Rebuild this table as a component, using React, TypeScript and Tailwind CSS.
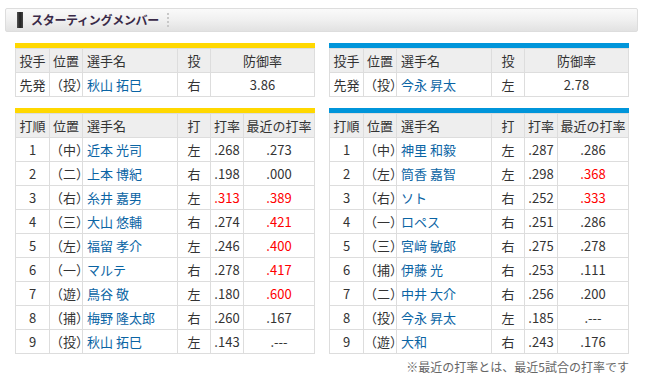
import type { ReactNode } from 'react';

type Batter = { order: number; pos: string; name: string; hand: string; avg: string; recent: string; avgHot?: boolean; recentHot?: boolean };

const tigers: Batter[] = [
  { order: 1, pos: '（中）', name: '近本 光司', hand: '左', avg: '.268', recent: '.273' },
  { order: 2, pos: '（二）', name: '上本 博紀', hand: '右', avg: '.198', recent: '.000' },
  { order: 3, pos: '（右）', name: '糸井 嘉男', hand: '左', avg: '.313', recent: '.389', avgHot: true, recentHot: true },
  { order: 4, pos: '（三）', name: '大山 悠輔', hand: '右', avg: '.274', recent: '.421', recentHot: true },
  { order: 5, pos: '（左）', name: '福留 孝介', hand: '左', avg: '.246', recent: '.400', recentHot: true },
  { order: 6, pos: '（一）', name: 'マルテ', hand: '右', avg: '.278', recent: '.417', recentHot: true },
  { order: 7, pos: '（遊）', name: '鳥谷 敬', hand: '左', avg: '.180', recent: '.600', recentHot: true },
  { order: 8, pos: '（捕）', name: '梅野 隆太郎', hand: '右', avg: '.260', recent: '.167' },
  { order: 9, pos: '（投）', name: '秋山 拓巳', hand: '左', avg: '.143', recent: '.---' },
];

const baystars: Batter[] = [
  { order: 1, pos: '（中）', name: '神里 和毅', hand: '左', avg: '.287', recent: '.286' },
  { order: 2, pos: '（左）', name: '筒香 嘉智', hand: '左', avg: '.298', recent: '.368', recentHot: true },
  { order: 3, pos: '（右）', name: 'ソト', hand: '右', avg: '.252', recent: '.333', recentHot: true },
  { order: 4, pos: '（一）', name: 'ロペス', hand: '右', avg: '.251', recent: '.286' },
  { order: 5, pos: '（三）', name: '宮﨑 敏郎', hand: '右', avg: '.275', recent: '.278' },
  { order: 6, pos: '（捕）', name: '伊藤 光', hand: '右', avg: '.253', recent: '.111' },
  { order: 7, pos: '（二）', name: '中井 大介', hand: '右', avg: '.256', recent: '.200' },
  { order: 8, pos: '（投）', name: '今永 昇太', hand: '左', avg: '.185', recent: '.---' },
  { order: 9, pos: '（遊）', name: '大和', hand: '右', avg: '.243', recent: '.176' },
];

function Th({ children, left }: { children: ReactNode; left?: boolean }) {
  return (
    <th className={`h-[24px] whitespace-nowrap border border-[#dddddd] bg-[#eeeeee] p-0 font-normal ${left ? 'pl-[4px] text-left' : 'text-center'}`}>{children}</th>
  );
}

function Td({ children, left, className = '' }: { children: ReactNode; left?: boolean; className?: string }) {
  return (
    <td className={`h-[24px] whitespace-nowrap border border-[#dddddd] bg-white p-0 ${left ? 'pl-[4px] text-left' : 'text-center'} ${className}`}>{children}</td>
  );
}

function PitcherTable({ bar, name, hand, era }: { bar: string; name: string; hand: string; era: string }) {
  return (
    <div className={`w-[300px] border-t-[5px] ${bar}`}>
      <table className="w-full table-fixed border-collapse">
        <colgroup>
          <col className="w-[34px]" />
          <col className="w-[33px]" />
          <col className="w-[95px]" />
          <col className="w-[33px]" />
          <col />
        </colgroup>
        <thead>
          <tr>
            <Th>投手</Th>
            <Th>位置</Th>
            <Th left>選手名</Th>
            <Th>投</Th>
            <Th>防御率</Th>
          </tr>
        </thead>
        <tbody>
          <tr>
            <Td>先発</Td>
            <Td>（投）</Td>
            <Td left className="text-[#0a64a4]">{name}</Td>
            <Td>{hand}</Td>
            <Td>{era}</Td>
          </tr>
        </tbody>
      </table>
    </div>
  );
}

function BattingTable({ bar, rows }: { bar: string; rows: Batter[] }) {
  return (
    <div className={`w-[300px] border-t-[5px] ${bar}`}>
      <table className="w-full table-fixed border-collapse">
        <colgroup>
          <col className="w-[34px]" />
          <col className="w-[33px]" />
          <col className="w-[95px]" />
          <col className="w-[33px]" />
          <col className="w-[33px]" />
          <col />
        </colgroup>
        <thead>
          <tr>
            <Th>打順</Th>
            <Th>位置</Th>
            <Th left>選手名</Th>
            <Th>打</Th>
            <Th>打率</Th>
            <Th>最近の打率</Th>
          </tr>
        </thead>
        <tbody>
          {rows.map((r) => (
            <tr key={r.order}>
              <Td>{r.order}</Td>
              <Td>{r.pos}</Td>
              <Td left className="text-[#0a64a4]">{r.name}</Td>
              <Td>{r.hand}</Td>
              <Td className={r.avgHot ? 'text-[#ff0000]' : ''}>{r.avg}</Td>
              <Td className={r.recentHot ? 'text-[#ff0000]' : ''}>{r.recent}</Td>
            </tr>
          ))}
        </tbody>
      </table>
    </div>
  );
}

export default function App() {
  return (
    <div className="h-[391px] w-[646px] bg-white pt-[8px] font-['Noto_Sans_CJK_JP',sans-serif] text-[13px] leading-none text-[#333333]">
      <div className="mx-[5px] mr-[8px] flex h-[24px] items-center rounded-[2px] border border-[#dddddd] bg-gradient-to-b from-[#fafafa] via-[#f0f0f0] to-[#e2e2e2] pl-[11px]">
        <span className="h-[16px] w-[6px] bg-gradient-to-r from-[#555555] via-[#222222] to-[#444444]" />
        <span className="ml-[8px] text-[12px] font-bold tracking-[-0.3px] text-[#3a2a48]">スターティングメンバー</span>
        <span className="ml-[8px] h-[14px] border-l-2 border-dotted border-[#c8c8c8]" />
      </div>

      <div className="mt-[11px] flex gap-[14px] pl-[15px]">
        <div className="flex flex-col gap-[11px]">
          <PitcherTable bar="border-[#ffd800]" name="秋山 拓巳" hand="右" era="3.86" />
          <BattingTable bar="border-[#ffd800]" rows={tigers} />
        </div>
        <div className="flex flex-col gap-[11px]">
          <PitcherTable bar="border-[#0095da]" name="今永 昇太" hand="左" era="2.78" />
          <BattingTable bar="border-[#0095da]" rows={baystars} />
          <p className="-mt-[4px] text-right text-[12px] text-[#666666]">※最近の打率とは、最近5試合の打率です</p>
        </div>
      </div>
    </div>
  );
}
